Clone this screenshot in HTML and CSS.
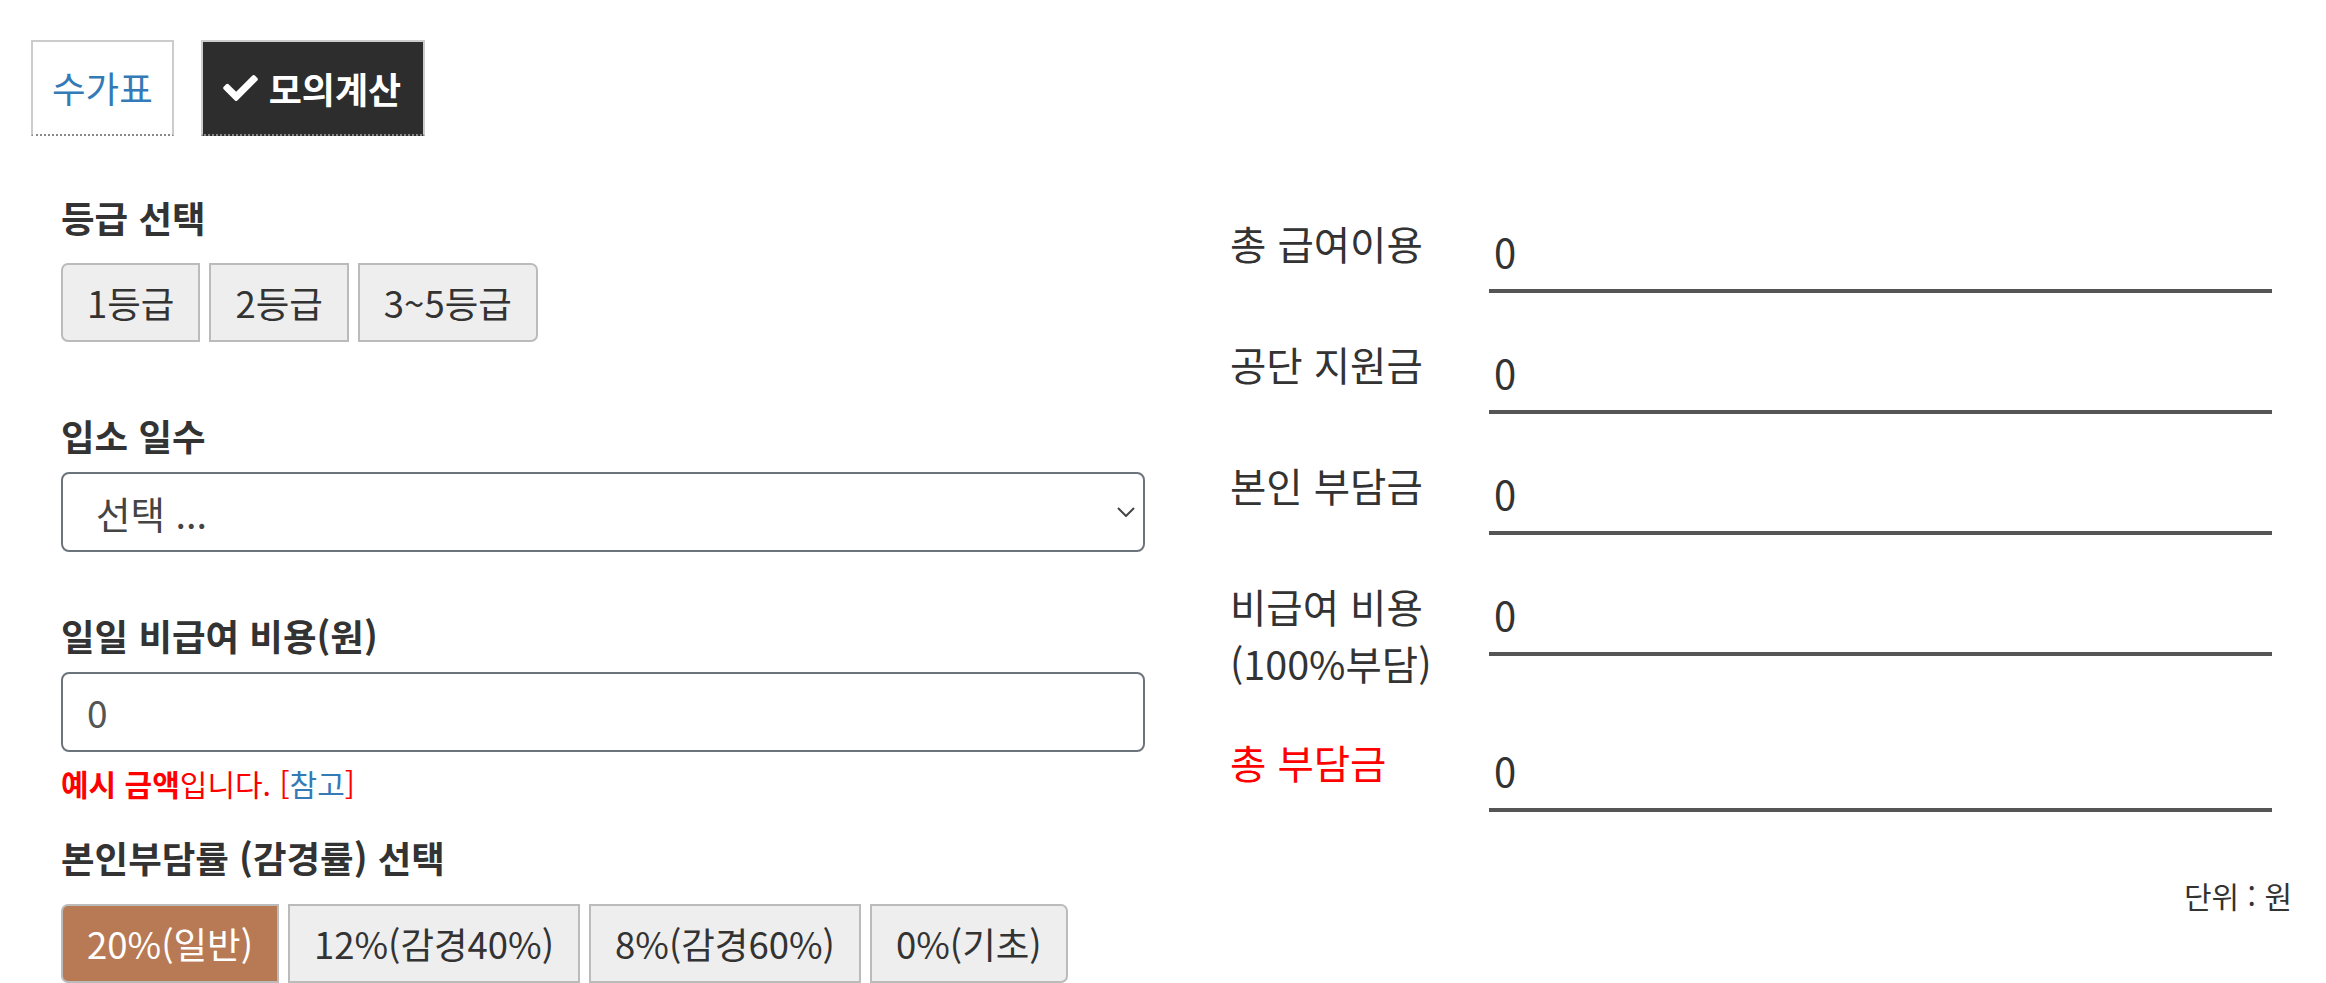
FILE: index.html
```html
<!DOCTYPE html>
<html lang="ko">
<head>
<meta charset="utf-8">
<title>모의계산</title>
<link rel="stylesheet" href="styles.css">
</head>
<body>
<div class="page">
  <div class="tabs">
    <a class="tab">수가표</a>
    <a class="tab tab-active"><svg class="check" viewBox="0 64 512 384" width="35" height="26"><path fill="#fff" d="M173.9 439.4l-166.4-166.4c-10-10-10-26.2 0-36.2l36.2-36.2c10-10 26.2-10 36.2 0L192 312.7 432.1 72.6c10-10 26.2-10 36.2 0l36.2 36.2c10 10 10 26.2 0 36.2l-294.4 294.4c-10 10-26.2 10-36.2 0z"/></svg>모의계산</a>
  </div>
  <div class="content">
    <div class="left">
      <div class="label label-first">등급 선택</div>
      <div class="btn-group group-grade">
        <button class="btn">1등급</button>
        <button class="btn">2등급</button>
        <button class="btn">3~5등급</button>
      </div>

      <div class="label label-days">입소 일수</div>
      <div class="select-wrap">
        <select class="select"><option>선택 ...</option></select>
        <svg class="chevron" viewBox="0 0 18 10" width="18" height="10"><path d="M1 1l8 8 8-8" fill="none" stroke="#444" stroke-width="2"/></svg>
      </div>

      <div class="label label-cost">일일 비급여 비용(원)</div>
      <input class="input" type="text" value="0">
      <div class="help"><b>예시 금액</b>입니다. [<a class="ref">참고</a>]</div>

      <div class="label label-rate">본인부담률 (감경률) 선택</div>
      <div class="btn-group group-rate">
        <button class="btn btn-active">20%(일반)</button>
        <button class="btn">12%(감경40%)</button>
        <button class="btn">8%(감경60%)</button>
        <button class="btn">0%(기초)</button>
      </div>
    </div>

    <div class="right">
      <div class="row">
        <div class="r-label">총 급여이용</div>
        <div class="field">0</div>
      </div>
      <div class="row">
        <div class="r-label">공단 지원금</div>
        <div class="field">0</div>
      </div>
      <div class="row">
        <div class="r-label">본인 부담금</div>
        <div class="field">0</div>
      </div>
      <div class="row">
        <div class="r-label">비급여 비용<br>(100%부담)</div>
        <div class="field">0</div>
      </div>
      <div class="row">
        <div class="r-label r-red">총 부담금</div>
        <div class="field">0</div>
      </div>
      <div class="unit">단위 : 원</div>
    </div>
  </div>
</div>
</body>
</html>
```
FILE: styles.css
```css
* { box-sizing: border-box; }
html, body { margin: 0; padding: 0; background: #fff; }
body {
  font-family: "Noto Sans CJK KR", "Noto Sans", sans-serif;
  color: #333;
  font-size: 36px;
}
.page { padding: 40px 0 0 31px; }

.tabs { display: flex; gap: 27px; }
.tab {
  display: flex;
  align-items: center;
  height: 96px;
  padding: 0 19px;
  border: 2px solid #ccc;
  border-bottom: 2px dotted #888;
  color: #337ab7;
  font-size: 36.5px;
  line-height: 52px;
  text-decoration: none;
}
.tab-active {
  background: #2d2d2d;
  color: #fff;
  font-weight: bold;
  font-size: 36px;
  padding: 0 22px 0 20px;
}
.check { margin-right: 11px; flex: none; }

.content { display: flex; align-items: flex-start; }
.left { width: 1084px; margin-left: 30px; }
.right { width: 1062px; margin-left: 85px; margin-top: 77px; }

.label {
  font-weight: bold;
  font-size: 36.5px;
  line-height: 51px;
  color: #333;
}
.label-first { margin-top: 56px; }
.label-days { margin-top: 68px; }
.label-cost { margin-top: 58px; }
.label-rate { margin-top: 28px; }

.btn-group { display: flex; gap: 9px; margin-top: 20px; }
.group-rate { margin-top: 21px; gap: 9px; }
.btn {
  font-family: inherit;
  font-size: 36.5px;
  line-height: 51px;
  padding: 12px 24px;
  height: 79px;
  background: #eee;
  color: #333;
  border: 2px solid #bbb;
  border-radius: 0;
  margin: 0;
}
.btn:first-child { border-radius: 7px 0 0 7px; }
.btn:last-child { border-radius: 0 7px 7px 0; }
.btn-active { background: #b87a55; color: #fff; }

.select-wrap { position: relative; margin-top: 11px; }
.select {
  display: block;
  width: 100%;
  height: 80px;
  appearance: none;
  -webkit-appearance: none;
  background: #fff;
  border: 2px solid #6c737b;
  border-radius: 8px;
  font-family: inherit;
  font-size: 37.5px;
  color: #444;
  padding: 0 60px 0 33px;
}
.chevron { position: absolute; right: 10px; top: 35px; }

.input {
  display: block;
  width: 100%;
  height: 80px;
  margin-top: 11px;
  border: 2px solid #6c737b;
  border-radius: 8px;
  font-family: inherit;
  font-size: 37px;
  color: #555;
  padding: 0 24px;
}

.help {
  margin-top: 10px;
  font-size: 30px;
  line-height: 42px;
  color: #f00;
}
.help b { font-weight: bold; }
.ref { color: #337ab7; text-decoration: none; }

.row { display: flex; align-items: flex-start; margin-bottom: 41px; }
.r-label {
  width: 259px;
  flex: none;
  padding-top: 1px;
  font-size: 39.5px;
  line-height: 57px;
  color: #333;
}
.r-red { color: #f00; }
.field {
  width: 783px;
  height: 80px;
  border-bottom: 4px solid #555;
  font-size: 40px;
  line-height: 76px;
  padding-left: 5px;
  color: #333;
}
.unit {
  margin-top: 62px;
  text-align: right;
  font-size: 30px;
  line-height: 42px;
  color: #333;
}
```
